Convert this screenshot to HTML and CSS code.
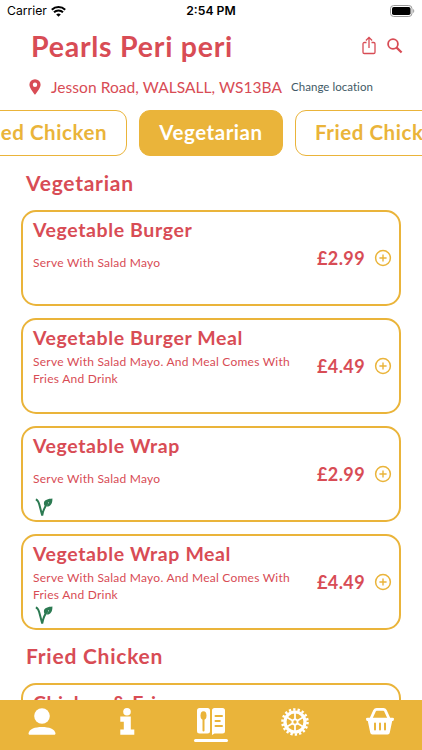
FILE: index.html
```html
<!DOCTYPE html>
<html lang="en">
<head>
<meta charset="utf-8">
<title>Pearls Peri peri</title>
<link rel="stylesheet" href="styles.css">
</head>
<body>
<svg class="defs" width="0" height="0">
  <symbol id="plus" viewBox="0 0 18 18"><circle cx="9" cy="9" r="7.400" fill="none" stroke="currentColor" stroke-width="1.500"/><path d="M9 5.400v7.200M5.400 9h7.200" fill="none" stroke="currentColor" stroke-width="1.400"/></symbol>
  <symbol id="leaf" viewBox="0 0 18 19"><path d="M.8 1.500C3 2 3.600 4 4.300 6.500L7.200 17.500C8.200 12 9.300 8.500 13 4.800" fill="none" stroke="currentColor" stroke-width="2" stroke-linejoin="bevel"/><path d="M17.400.4C13.500.7 8.900 1.500 8.900 5.200c0 1.300.5 2.200 1.200 2.700L13.300 4.200l.7.500-2.600 3.700C15.500 8.800 17.600 5.500 17.400.4z" fill="currentColor"/></symbol>
</svg>
<div class="app">
  <div class="status">
    <div class="carrier">Carrier
      <svg width="15" height="11" viewBox="0 0 15 11"><path d="M7.500 10.800 5.200 8.500a3.300 3.300 0 0 1 4.600 0z"/><path d="M3 6.300a6.400 6.400 0 0 1 9 0M.8 3.800a9.500 9.500 0 0 1 13.400 0" fill="none" stroke="#000" stroke-width="2"/></svg>
    </div>
    <div class="time">2:54 PM</div>
    <svg class="battery" width="25" height="12" viewBox="0 0 25 12"><rect x=".5" y=".5" width="21.500" height="11" rx="3.200" fill="none" stroke="#999"/><rect x="2" y="2" width="18.500" height="8" rx="1.800"/><path d="M23.200 4v4c1.400-.5 1.400-3.500 0-4z" fill="#999"/></svg>
  </div>
  <header class="head">
    <h1>Pearls Peri peri</h1>
    <svg class="share" width="14" height="19" viewBox="0 0 14 19"><path d="M4.500 6.500H2.300A1.300 1.300 0 0 0 1 7.800v8.400a1.300 1.300 0 0 0 1.300 1.300h9.400a1.300 1.300 0 0 0 1.300-1.300V7.800a1.300 1.300 0 0 0-1.300-1.300H9.500M7 12V1.500M3.900 4.500 7 1.400l3.100 3.100" fill="none" stroke="currentColor" stroke-width="1.300"/></svg>
    <svg width="16" height="16" viewBox="0 0 16 16"><circle cx="6" cy="6" r="4.900" fill="none" stroke="currentColor" stroke-width="1.800"/><path d="m9.600 9.600 5 4.900" stroke="currentColor" stroke-width="2.200"/></svg>
  </header>
  <div class="place">
    <svg width="12" height="16" viewBox="0 0 12 16"><path fill-rule="evenodd" d="M6 .2a5.600 5.600 0 0 1 5.600 5.600C11.600 9.500 6 15.700 6 15.700S.4 9.500.4 5.800A5.600 5.600 0 0 1 6 .2zm0 3.400a2.200 2.200 0 1 0 0 4.400 2.200 2.200 0 0 0 0-4.400z" fill="currentColor"/></svg>
    <span class="address">Jesson Road, WALSALL, WS13BA</span>
    <a class="change">Change location</a>
  </div>
  <nav class="tabs">
    <div class="tab prev">Grilled Chicken</div>
    <div class="tab active">Vegetarian</div>
    <div class="tab next">Fried Chicken</div>
  </nav>
  <main class="menu">
    <h2>Vegetarian</h2>
    <section class="card">
      <div class="info"><h3>Vegetable Burger</h3><div class="desc"><p>Serve With Salad Mayo</p></div></div>
      <div class="price">£2.99</div><svg class="add"><use href="#plus"/></svg>
    </section>
    <section class="card">
      <div class="info"><h3>Vegetable Burger Meal</h3><div class="desc"><p>Serve With Salad Mayo. And Meal Comes With<br>Fries And Drink</p></div></div>
      <div class="price">£4.49</div><svg class="add"><use href="#plus"/></svg>
    </section>
    <section class="card">
      <div class="info"><h3>Vegetable Wrap</h3><div class="desc"><p>Serve With Salad Mayo</p></div><svg class="leaf"><use href="#leaf"/></svg></div>
      <div class="price">£2.99</div><svg class="add"><use href="#plus"/></svg>
    </section>
    <section class="card">
      <div class="info"><h3>Vegetable Wrap Meal</h3><div class="desc"><p>Serve With Salad Mayo. And Meal Comes With<br>Fries And Drink</p></div><svg class="leaf"><use href="#leaf"/></svg></div>
      <div class="price">£4.49</div><svg class="add"><use href="#plus"/></svg>
    </section>
    <h2>Fried Chicken</h2>
    <section class="card">
      <div class="info"><h3>Chicken &amp; Fries</h3></div>
    </section>
  </main>
  <footer class="bar">
    <div class="item"><svg width="28" height="28" viewBox="0 0 28 28"><circle cx="14" cy="8" r="7.800"/><path d="M.5 25.500C1 21 7 19 14 19s13 2 13.500 6.500c0 .9-.6 1.300-1.500 1.300H2c-.9 0-1.500-.4-1.500-1.300z"/></svg></div>
    <div class="item"><svg width="28" height="28" viewBox="0 0 28 28"><circle cx="14" cy="3.800" r="3.800"/><path d="M7.300 8.500h10.500v13h3.500v5.300h-14v-5.300h3.500v-7.700H7.300z"/></svg></div>
    <div class="item current"><svg width="28" height="28" viewBox="0 0 28 28"><rect x="0" y="0" width="13" height="25.500" rx="2.500"/><path d="M17.500 0H25.500A2.500 2.500 0 0 1 28 2.500V23a2.500 2.500 0 0 1-2.500 2.500H17.500L15 27V2.500A2.500 2.500 0 0 1 17.500 0z"/><ellipse class="cut" cx="6.500" cy="7.500" rx="3" ry="4.300"/><path class="line" d="M6.500 10v12.500M18.500 8H25M18.500 13h4.300M18.500 18H25"/></svg></div>
    <div class="item"><svg width="28" height="28" viewBox="0 0 28 28"><g fill="none" stroke="#fff"><circle cx="14" cy="14" r="10" stroke-width="3.200"/><circle cx="14" cy="14" r="12.500" stroke-width="2.600" stroke-dasharray="2.300 2.063"/><circle cx="14" cy="14" r="2.600" stroke-width="1.800"/><path stroke-width="1.800" d="M14 4v7M14 17v7M5.340 9l6.060 3.500M16.600 15.500l6.060 3.500M5.340 19l6.060-3.500M16.600 12.500 22.660 9"/></g></svg></div>
    <div class="item"><svg width="28" height="28" viewBox="0 0 28 28"><path d="M1.500 9.800h25a1.400 1.400 0 0 1 1.300 1.900l-.6 1.300h-1L23.800 24.500a2.200 2.200 0 0 1-2.200 1.900H6.400a2.200 2.200 0 0 1-2.200-1.900L1.800 13h-1l-.6-1.300a1.400 1.400 0 0 1 1.300-1.900z"/><path fill="none" stroke="#fff" stroke-width="2.800" d="M4.800 11 8.600 2.600q.6-1.200 2-1.200h6.800q1.400 0 2 1.200L23.200 11"/><path class="line" d="M9 15.500v6M14 15.500v6M19 15.500v6"/></svg></div>
  </footer>
</div>
</body>
</html>
```
FILE: styles.css
```css
* { box-sizing: border-box; }
body { margin: 0; background: #fff; font-family: Lato, "Liberation Sans", sans-serif; color: #d84c55; }
h1, h2, h3, p { margin: 0; }
.defs { display: block; }
svg { display: block; flex: none; }
.app { width: 422px; height: 750px; display: flex; flex-direction: column; overflow: hidden; }
.status { height: 22px; flex: none; display: grid; grid-template-columns: 1fr auto 1fr; align-items: center; padding: 0 7px; color: #000; font: 12.200px/22px Inter, sans-serif; }
.carrier { display: flex; align-items: center; gap: 4px; }
.time { font-weight: 600; }
.battery { justify-self: end; }
.head { height: 49px; flex: none; display: flex; align-items: center; padding: 0 19px 2px 31px; }
h1 { flex: 1; font-size: 28.500px; line-height: 34px; font-weight: 700; letter-spacing: .75px; }
.share { margin-right: 11px; }
.place { height: 32px; flex: none; display: flex; align-items: center; padding: 0 0 1px 28.500px; }
.address { margin-left: 10.500px; font-size: 15.500px; letter-spacing: .06px; width: 240px; white-space: nowrap; }
.change { font-size: 11.500px; color: #3f5a66; letter-spacing: .04px; }
.tabs { height: 53px; flex: none; display: flex; justify-content: center; gap: 12px; padding-top: 7px; }
.tab { flex: none; height: 46px; border: 1.500px solid #eab43a; border-radius: 11px; display: flex; align-items: center; font-size: 20.500px; padding-bottom: 2px; font-weight: 700; color: #eab43a; white-space: nowrap; letter-spacing: .55px; }
.prev { width: 178px; justify-content: flex-end; padding-right: 19px; }
.active { width: 144px; justify-content: center; background: #eab43a; color: #fff; }
.next { width: 178px; padding-left: 19px; }
.menu { flex: 1; min-height: 0; overflow: hidden; padding: 0 21px; }
h2 { height: 54px; padding-left: 5px; font-size: 21px; line-height: 54px; font-weight: 700; letter-spacing: .75px; }
.card { height: 96px; margin-bottom: 12px; border: 2px solid #eab43a; border-radius: 15px; display: flex; align-items: center; padding: 0 7px 0 10px; }
.card + h2 { margin-top: -12px; height: 53px; line-height: 52px; }
.info { flex: 1; align-self: stretch; display: flex; flex-direction: column; }
h3 { font-size: 19.500px; line-height: 24px; margin-top: 6px; font-weight: 700; letter-spacing: .6px; white-space: nowrap; }
.desc { height: 40px; display: flex; align-items: center; font-size: 12px; line-height: 17px; letter-spacing: .24px; white-space: nowrap; }
.price { width: 57px; font-size: 18px; line-height: 22px; padding-bottom: 1px; font-weight: 700; letter-spacing: .4px; }
.add { width: 18px; height: 18px; color: #eab43a; }
.leaf { width: 18px; height: 19px; margin-left: 2px; color: #2c7a52; }
.bar { height: 50px; flex: none; background: #eab43a; display: grid; grid-template-columns: repeat(5, 84.400px); }
.item { display: flex; flex-direction: column; align-items: center; padding-top: 8px; fill: #fff; }
.current::after { content: ""; width: 34px; height: 2.500px; margin-top: 3px; border-radius: 2px; background: #fff; }
.cut { fill: #eab43a; }
.line { fill: none; stroke: #eab43a; stroke-width: 2; stroke-linecap: round; }
```
